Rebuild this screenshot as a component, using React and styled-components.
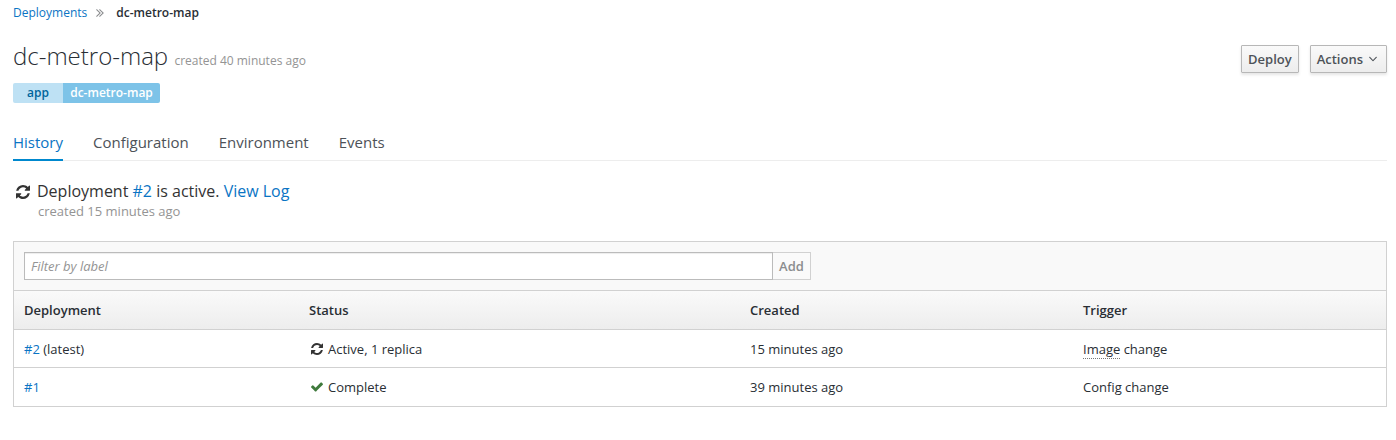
import React from "react";
import styled, { createGlobalStyle, css } from "styled-components";

const GlobalStyle = createGlobalStyle`
  *, *::before, *::after { box-sizing: border-box; }
  body {
    margin: 0;
    background: #fff;
    color: #333;
    font-family: "Open Sans", "Liberation Sans", sans-serif;
    font-size: 13px;
    line-height: 20px;
  }
`;

const Page = styled.main`
  padding: 3px 9px 0 13px;
`;

const Link = styled.a`
  color: #0a74c4;
  text-decoration: none;
`;

const Breadcrumb = styled.nav`
  display: flex;
  align-items: center;
  height: 20px;
  font-size: 12px;
  svg { margin: 0 12px 0 9px; }
`;

const Current = styled.span`
  font-weight: 600;
  color: #292e34;
`;

const Header = styled.header`
  display: flex;
  justify-content: space-between;
  align-items: flex-start;
  height: 60px;
  padding-top: 16px;
`;

const Title = styled.h1`
  margin: 0;
  font-size: 24px;
  line-height: 34px;
  font-weight: 300;
  color: #292e34;
`;

const Muted = styled.small`
  font-size: ${(p) => p.$size}px;
  font-weight: 400;
  color: #949494;
`;

const Buttons = styled.div`
  display: flex;
  gap: 11px;
  padding-top: 6px;
`;

const Button = styled.button`
  display: flex;
  align-items: center;
  gap: 6px;
  height: 28px;
  padding: 0 ${(p) => (p.$menu ? 9 : 6)}px 0 6px;
  border: 1px solid #b7b7b7;
  border-radius: 1px;
  background: linear-gradient(#fafafa, #ededed);
  box-shadow: 0 2px 3px rgba(3, 3, 3, 0.1);
  color: #4d5258;
  font: 600 13px/20px "Open Sans", sans-serif;
`;

const Label = styled.div`
  display: flex;
  width: 147px;
  height: 20px;
  border-radius: 2px;
  overflow: hidden;
  font-size: 12px;
  line-height: 20px;
  font-weight: 600;
  text-align: center;
`;

const LabelKey = styled.span`
  width: 50px;
  background: #bee1f4;
  color: #00659c;
`;

const LabelValue = styled.span`
  flex: 1;
  background: #7dc3e8;
  color: #fff;
`;

const Tabs = styled.nav`
  display: flex;
  gap: 30px;
  margin-top: 25px;
  height: 33px;
  border-bottom: 1px solid #ededed;
`;

const Tab = styled.a`
  height: 33px;
  padding-top: 4px;
  font-size: 15px;
  line-height: 21px;
  color: #4d5258;
  ${(p) => p.$active && css`
    color: #0a74c4;
    border-bottom: 2px solid #0088ce;
  `}
`;

const Summary = styled.section`
  margin-top: 20px;
  height: 60px;
`;

const SummaryLine = styled.div`
  display: flex;
  align-items: center;
  font-size: 16px;
  line-height: 21px;
  svg { margin: 0 7px 0 3px; }
`;

const SummaryNote = styled.div`
  padding-left: 25px;
  line-height: 19px;
`;

const Panel = styled.section`
  border: 1px solid #d1d1d1;
`;

const Toolbar = styled.div`
  display: flex;
  height: 49px;
  padding: 10px;
  background: #f9f9f9;
  border-bottom: 1px solid #d1d1d1;
`;

const FilterInput = styled.input`
  width: 749px;
  height: 28px;
  padding: 0 6px;
  border: 1px solid #bbb;
  border-radius: 0;
  background: #fff;
  box-shadow: inset 0 1px 1px rgba(3, 3, 3, 0.075);
  font: 13px/20px "Open Sans", sans-serif;
  &::placeholder { color: #949494; font-style: italic; opacity: 1; }
`;

const AddButton = styled.button`
  width: 38px;
  height: 28px;
  padding: 0;
  border: 1px solid #d1d1d1;
  border-left: 0;
  background: #fafafa;
  color: #8b8d8f;
  font: 600 13px/20px "Open Sans", sans-serif;
`;

const Row = styled.div`
  display: grid;
  grid-template-columns: 285px 441px 333px 1fr;
  align-items: center;
  height: ${(p) => p.$height}px;
  padding-left: 10px;
  color: #292e34;
  & + & { border-top: 1px solid #d1d1d1; }
  ${(p) => p.$head && css`
    background: linear-gradient(#fafafa, #ededed);
    font-weight: 600;
  `}
`;

const Status = styled.span`
  display: flex;
  align-items: center;
  svg { margin: 0 5px 0 2px; }
`;

const Abbr = styled.span`
  display: inline-block;
  line-height: 17px;
  border-bottom: 1px dotted #777;
`;

const RefreshIcon = ({ size }) => (
  <svg width={size} height={size} viewBox="0 0 1536 1536" fill="#333">
    <path d="M1511 928q0 5-1 7-64 268-268 434.5t-478 166.5q-146 0-282.5-55t-243.5-157l-129 129q-19 19-45 19t-45-19-19-45v-448q0-26 19-45t45-19h448q26 0 45 19t19 45-19 45l-137 137q71 66 161 102t187 36q134 0 250-65t186-179q11-17 53-117 8-23 30-23h192q13 0 22.5 9.5t9.5 22.5zm25-800v448q0 26-19 45t-45 19h-448q-26 0-45-19t-19-45 19-45l138-138q-148-137-349-137-134 0-250 65t-186 179q-11 17-53 117-8 23-30 23h-199q-13 0-22.5-9.5t-9.5-22.5v-7q65-268 270-434.5t480-166.5q146 0 284 55.5t245 156.5l130-129q19-19 45-19t45 19 19 45z" />
  </svg>
);

const CheckIcon = () => (
  <svg width="12" height="10" viewBox="121 334 1550 1188" fill="#3f7a3d">
    <path d="M1671 566q0 40-28 68l-724 724-136 136q-28 28-68 28t-68-28l-136-136-362-362q-28-28-28-68t28-68l136-136q28-28 68-28t68 28l294 295 656-657q28-28 68-28t68 28l136 136q28 28 28 68z" />
  </svg>
);

const DoubleAngleIcon = () => (
  <svg width="8" height="8" viewBox="0 450 1000 1020" fill="#8b8d8f">
    <path d="M595 960q0 13-10 23l-466 466q-10 10-23 10t-23-10l-50-50q-10-10-10-23t10-23l393-393-393-393q-10-10-10-23t10-23l50-50q10-10 23-10t23 10l466 466q10 10 10 23zm384 0q0 13-10 23l-466 466q-10 10-23 10t-23-10l-50-50q-10-10-10-23t10-23l393-393-393-393q-10-10-10-23t10-23l50-50q10-10 23-10t23 10l466 466q10 10 10 23z" />
  </svg>
);

const AngleDownIcon = () => (
  <svg width="8" height="6" viewBox="67 620 1018 640" fill="#4d5258">
    <path d="M1075 736q0 13-10 23l-466 466q-10 10-23 10t-23-10l-466-466q-10-10-10-23t10-23l50-50q10-10 23-10t23 10l393 393 393-393q10-10 23-10t23 10l50 50q10 10 10 23z" />
  </svg>
);

export default function App() {
  return (
    <>
      <GlobalStyle />
      <Page>
        <Breadcrumb>
          <Link>Deployments</Link>
          <DoubleAngleIcon />
          <Current>dc-metro-map</Current>
        </Breadcrumb>
        <Header>
          <Title>
            dc-metro-map <Muted $size={12}>created 40 minutes ago</Muted>
          </Title>
          <Buttons>
            <Button>Deploy</Button>
            <Button $menu>Actions <AngleDownIcon /></Button>
          </Buttons>
        </Header>
        <Label>
          <LabelKey>app</LabelKey>
          <LabelValue>dc-metro-map</LabelValue>
        </Label>
        <Tabs>
          <Tab $active>History</Tab>
          <Tab>Configuration</Tab>
          <Tab>Environment</Tab>
          <Tab>Events</Tab>
        </Tabs>
        <Summary>
          <SummaryLine>
            <RefreshIcon size={14} />
            <span>
              Deployment <Link>#2</Link> is active. <Link>View Log</Link>
            </span>
          </SummaryLine>
          <SummaryNote><Muted $size={13}>created 15 minutes ago</Muted></SummaryNote>
        </Summary>
        <Panel>
          <Toolbar>
            <FilterInput placeholder="Filter by label" />
            <AddButton>Add</AddButton>
          </Toolbar>
          <Row $head $height={38}>
            <span>Deployment</span>
            <span>Status</span>
            <span>Created</span>
            <span>Trigger</span>
          </Row>
          <Row $height={38}>
            <span><Link>#2</Link> (latest)</span>
            <Status><RefreshIcon size={12} />Active, 1 replica</Status>
            <span>15 minutes ago</span>
            <span><Abbr>Image</Abbr> change</span>
          </Row>
          <Row $height={39}>
            <span><Link>#1</Link></span>
            <Status><CheckIcon />Complete</Status>
            <span>39 minutes ago</span>
            <span>Config change</span>
          </Row>
        </Panel>
      </Page>
    </>
  );
}
